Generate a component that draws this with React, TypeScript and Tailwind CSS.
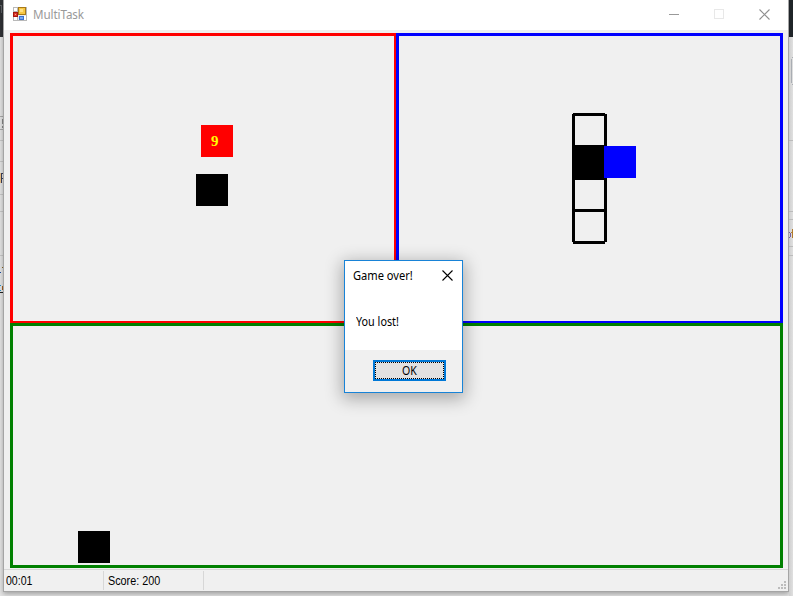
import React from "react";

function AppIcon() {
  return (
    <svg width="14" height="14" viewBox="0 0 14 14" shapeRendering="crispEdges">
      <rect width="14" height="14" fill="#b9b9b9" />
      <rect x="1" y="1" width="3" height="3" fill="#fff" />
      <rect x="1" y="10" width="3" height="3" fill="#fff" />
      <rect x="5" y="8" width="8" height="5" fill="#e8ebf2" />
      <rect x="11" y="9" width="2" height="4" fill="#fff" />
      <rect x="5" y="0" width="8" height="8" fill="#a87a18" />
      <rect x="6" y="1" width="6" height="6" fill="#f7c744" />
      <rect x="7" y="2" width="3" height="3" fill="#ffe084" />
      <rect x="0" y="5" width="5" height="5" fill="#a5160f" />
      <rect x="1" y="6" width="3" height="3" fill="#d8392c" />
      <rect x="2" y="7" width="1" height="1" fill="#ff9a86" />
      <rect x="6" y="9" width="5" height="4" fill="#3a70d0" />
      <rect x="7" y="10" width="3" height="2" fill="#76a8f2" />
    </svg>
  );
}

function TitleBar() {
  return (
    <header className="flex h-[30px] items-center bg-white pb-[2px] pl-[9px] text-[#999]">
      <AppIcon />
      <span className="mt-[2px] ml-[6px] w-[100px] origin-left scale-x-[0.97] text-[12px] leading-4 tracking-[-0.1px]">
        MultiTask
      </span>
      <div className="ml-auto flex items-center gap-[35px] pr-[18px]">
        <svg width="10" height="11" shapeRendering="crispEdges">
          <path d="M0 5.5h10" stroke="#999" />
        </svg>
        <svg width="10" height="10" shapeRendering="crispEdges">
          <rect x=".5" y=".5" width="9" height="9" fill="none" stroke="#e8e8e8" />
        </svg>
        <svg width="11" height="11">
          <path d="M.5 .5l10 10M10.5 .5l-10 10" stroke="#8f8f8f" strokeWidth="1.1" />
        </svg>
      </div>
    </header>
  );
}

function LeftBackdrop() {
  return (
    <div className="h-full w-[3px] shrink-0 overflow-hidden bg-[#e5e5e5]">
      <svg width="3" height="596" shapeRendering="crispEdges">
        <rect width="3" height="37" fill="#303235" />
        <path d="M0 5h2M1 5v8" stroke="#606367" />
        <path d="M0 116.500h3M0 129.500h3" stroke="#aaa" />
        <path d="M2.500 119v5M2.500 126v2" stroke="#888" />
        <path d="M0 140.500h3M0 161.500h3M0 194.500h3M0 211.500h3M0 255.500h3" stroke="#c9c9c9" />
        <path d="M1.500 173v10M1 173.500h2M1 178.500h2" stroke="#39405c" />
        <path d="M0 173v10" stroke="#efc184" />
        <path d="M2 267.500h1" stroke="#8a6420" />
        <path d="M0 272.500h1" stroke="#174aa0" />
        <path d="M0 285.500h1M0 290.500h1" stroke="#2693c8" />
        <path d="M2.500 286v4" stroke="#a86020" />
        <path d="M0 292.500h3" stroke="#222" />
      </svg>
    </div>
  );
}

function RightBackdrop() {
  return (
    <div className="h-full w-1 shrink-0 overflow-hidden bg-linear-to-r from-[#cfcfcf] to-[#e0e0e0]">
      <svg width="4" height="596" shapeRendering="crispEdges">
        <rect width="4" height="37" fill="#1f2428" />
        <path d="M4 57.500h-1M2.500 59v24M3 84.500h1" stroke="#a9adb3" />
        <path d="M0 140.500h4M0 211.500h4M0 219.500h4M0 246.500h4M0 255.500h4" stroke="#bbb" />
        <path d="M0 232.500h1M1.500 233v4M0 237.500h1" stroke="#7760a0" />
        <path d="M3.500 229v9M2 232.500h2" stroke="#b17a2c" />
      </svg>
    </div>
  );
}

function Board() {
  return (
    <main className="grid h-[535px] w-[773px] grid-cols-[386px_387px] grid-rows-[290px_245px]">
      <section className="relative border-[3px] border-r-2 border-b-2 border-[#f00]">
        <div className="absolute top-[89px] left-[188px] size-8 bg-[#f00] pl-[10px] font-['Liberation_Serif',serif] text-[15px] leading-8 font-bold text-[#ff0]">
          9
        </div>
        <div className="absolute top-[138px] left-[183px] size-8 bg-black" />
      </section>
      <section className="relative border-[3px] border-b-2 border-[#00f]">
        <svg className="absolute top-[77px] left-[173px]" width="65" height="131" shapeRendering="crispEdges">
          <g fill="#000">
            <rect x="1" y="0" width="32" height="3" />
            <rect x="0" y="1" width="3" height="128" />
            <rect x="32" y="1" width="3" height="128" />
            <rect x="1" y="96" width="32" height="3" />
            <rect x="1" y="128" width="32" height="3" />
            <rect x="1" y="32" width="33" height="35" />
          </g>
          <rect x="32" y="33" width="32" height="32" fill="#00f" />
        </svg>
      </section>
      <section className="relative col-span-2 border-[3px] border-[#008000]">
        <div className="absolute top-[205px] left-[65px] size-8 bg-black" />
      </section>
    </main>
  );
}

function StatusBar() {
  return (
    <footer className="mt-px flex h-[22px] border-t border-[#d7d7d7] pt-px font-['Liberation_Sans',Arial,sans-serif] text-[12px] leading-5 text-black">
      <div className="h-[19px] w-[100px] border-r border-[#d7d7d7] pl-[2px]">
        <span className="inline-block origin-left scale-x-[0.88]">00:01</span>
      </div>
      <div className="h-[19px] w-[100px] border-r border-[#d7d7d7] pl-[4px]">
        <span className="inline-block origin-left scale-x-[0.9] whitespace-nowrap">Score: 200</span>
      </div>
      <svg className="mt-[10px] mr-[2px] ml-auto" width="8" height="8" fill="#bcbcbc" shapeRendering="crispEdges">
        <path d="M6 0h2v2h-2zM3 3h2v2h-2zM6 3h2v2h-2zM0 6h2v2h-2zM3 6h2v2h-2zM6 6h2v2h-2z" />
      </svg>
    </footer>
  );
}

function GameOverDialog() {
  return (
    <div
      role="dialog"
      className="absolute top-[260px] left-[344px] flex h-[133px] w-[119px] flex-col border border-[#1883d7] bg-white text-[12px] leading-4 text-black shadow-[0_4px_16px_2px_rgba(0,0,0,0.3)]"
    >
      <div className="flex h-[29px] items-center justify-between pr-[10px] pl-2">
        <span className="origin-left scale-x-[0.925] whitespace-nowrap">Game over!</span>
        <svg className="mr-[-1px] shrink-0" width="11" height="11">
          <path d="M.5 .5l10 10M10.5 .5l-10 10" stroke="#000" strokeWidth="1.1" />
        </svg>
      </div>
      <div className="flex-1 pt-[24px] pl-[11px]">
        <span className="inline-block origin-left scale-x-[0.9]">You lost!</span>
      </div>
      <div className="flex h-[42px] justify-end bg-[#f0f0f0] pt-[10px] pr-4">
        <button className="h-[21px] w-[73px] border-2 border-[#0078d7] bg-[#e1e1e1]">
          <span className="flex h-full items-center justify-center border border-dotted border-black">
            <span className="mt-px scale-x-[0.88]">OK</span>
          </span>
        </button>
      </div>
    </div>
  );
}

export default function App() {
  return (
    <div className="relative flex h-[596px] w-[793px] overflow-hidden bg-[#e5e5e5] font-['Noto_Sans','Open_Sans',sans-serif]">
      <LeftBackdrop />
      <div className="h-[592px] w-[786px] shrink-0 border-x border-b border-[#a5a5a5] bg-[#f0f0f0] shadow-[0_2px_5px_rgba(0,0,0,0.3)]">
        <TitleBar />
        <div className="px-[6px] pt-[3px]">
          <Board />
        </div>
        <StatusBar />
      </div>
      <RightBackdrop />
      <GameOverDialog />
    </div>
  );
}
